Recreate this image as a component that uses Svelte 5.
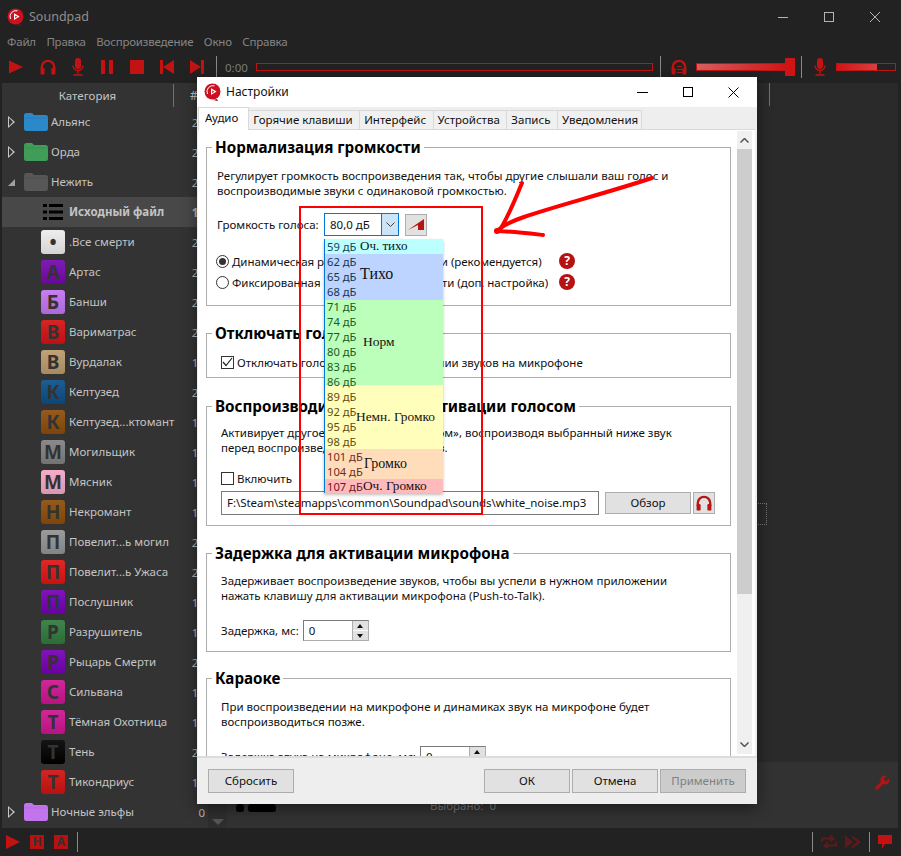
<script lang="ts">
  const menu = ['Файл', 'Правка', 'Воспроизведение', 'Окно', 'Справка'];
  const tabs = ['Аудио', 'Горячие клавиши', 'Интерфейс', 'Устройства', 'Запись', 'Уведомления'];

  const rows = [
    { name: '.Все смерти', letter: '•', color: '#ececec', count: '21' },
    { name: 'Артас', letter: 'А', color: '#7408ae', count: '21' },
    { name: 'Банши', letter: 'Б', color: '#c273ef', count: '21' },
    { name: 'Вариматрас', letter: 'В', color: '#d21212', count: '21' },
    { name: 'Вурдалак', letter: 'В', color: '#bb9a6c', count: '11' },
    { name: 'Келтузед', letter: 'К', color: '#0b4f88', count: '21' },
    { name: 'Келтузед...ктомант', letter: 'К', color: '#8c4c0a', count: '11' },
    { name: 'Могильщик', letter: 'М', color: '#808080', count: '11' },
    { name: 'Мясник', letter: 'М', color: '#f3a6c4', count: '11' },
    { name: 'Некромант', letter: 'Н', color: '#8c4c0a', count: '11' },
    { name: 'Повелит...ь могил', letter: 'П', color: '#929292', count: '21' },
    { name: 'Повелит...ь Ужаса', letter: 'П', color: '#de1414', count: '21' },
    { name: 'Послушник', letter: 'П', color: '#7400b4', count: '11' },
    { name: 'Разрушитель', letter: 'Р', color: '#2f7a3c', count: '11' },
    { name: 'Рыцарь Смерти', letter: 'Р', color: '#7400b4', count: '21' },
    { name: 'Сильвана', letter: 'С', color: '#cc1590', count: '11' },
    { name: 'Тёмная Охотница', letter: 'Т', color: '#cc1590', count: '11' },
    { name: 'Тень', letter: 'Т', color: '#000000', count: '21' },
    { name: 'Тикондриус', letter: 'Т', color: '#cf1212', count: '11' }
  ];

  const bands = [
    { label: 'Оч. тихо', color: '#bbffff', h: 15, x: 35, y: -1, size: 13 },
    { label: 'Тихо', color: '#bcd4ff', h: 46, x: 35, y: -3, size: 16 },
    { label: 'Норм', color: '#bbffbb', h: 85, x: 38, y: -1, size: 13.5 },
    { label: 'Немн. Громко', color: '#ffffbb', h: 64, x: 31, y: 0, size: 13.4 },
    { label: 'Громко', color: '#ffddbb', h: 30, x: 39, y: 0, size: 14 },
    { label: 'Оч. Громко', color: '#ffbbbb', h: 14, x: 38, y: 0, size: 13.3 }
  ];

  const levels = [
    { db: 59, color: '#0f4560' }, { db: 62, color: '#103658' }, { db: 65, color: '#103658' },
    { db: 68, color: '#103658' }, { db: 71, color: '#175c24' }, { db: 74, color: '#175c24' },
    { db: 77, color: '#175c24' }, { db: 80, color: '#175c24' }, { db: 83, color: '#175c24' },
    { db: 86, color: '#275c24' }, { db: 89, color: '#5e4c10' }, { db: 92, color: '#5e4c10' },
    { db: 95, color: '#5e4c10' }, { db: 98, color: '#5e4c10' }, { db: 101, color: '#6e2c18' },
    { db: 104, color: '#6e2c18' }, { db: 107, color: '#6e1424' }
  ];
</script>

{#snippet logo(size)}
  <svg class="logo" width={size} height={size} viewBox="0 0 18 18">
    <circle cx="8.5" cy="8.5" r="8" fill="#cc1020" />
    <path d="M3.5 11a6 6 0 0 1 7-8.2" fill="none" stroke="#fff" stroke-width="1" />
    <path d="M7 5.2v6.8l5.6-3.4z" fill="#fff" />
    <path d="M8.2 7.4v2.6l2.2-1.3z" fill="#cc1020" />
    <path d="M9 17l4-1 1 2z" fill="#8c0c18" />
  </svg>
{/snippet}

{#snippet headphones(size)}
  <svg width={size} height={size} viewBox="0 0 16 16">
    <path d="M1.8 11V8a6.2 6.2 0 0 1 12.4 0v3" fill="none" stroke="currentColor" stroke-width="2.3" />
    <rect x="0.6" y="9" width="4" height="6.6" rx="1.2" fill="currentColor" />
    <rect x="11.4" y="9" width="4" height="6.6" rx="1.2" fill="currentColor" />
  </svg>
{/snippet}

{#snippet mic()}
  <svg width="12" height="18" viewBox="0 0 12 18">
    <rect x="3" y="0" width="6" height="11" rx="3" fill="currentColor" />
    <path d="M1 7.5a5 5 0 0 0 10 0M6 12.5v3.5M1.5 17h9" fill="none" stroke="currentColor" stroke-width="1.3" />
  </svg>
{/snippet}

{#snippet folder(color)}
  <svg width="24" height="18" viewBox="0 0 24 18">
    <path d="M0 2.5Q0 0 2.5 0H8l2 2h11.5Q24 2 24 4.5v11q0 2.5-2.5 2.5h-19Q0 18 0 15.5z" fill={color} />
    <path d="M0 5h24" stroke="#000" stroke-opacity=".08" />
  </svg>
{/snippet}

{#snippet help()}
  <span class="help">?</span>
{/snippet}

<div class="app">
  <header class="titlebar">
    {@render logo(18)}
    <span class="app-title">Soundpad</span>
    <div class="win-btns">
      <svg width="10" height="10" viewBox="0 0 10 10"><path d="M0 5.5h10" stroke="currentColor" /></svg>
      <svg width="10" height="10" viewBox="0 0 10 10"><rect x=".5" y=".5" width="9" height="9" fill="none" stroke="currentColor" /></svg>
      <svg width="10" height="10" viewBox="0 0 10 10"><path d="M0 0l10 10M10 0L0 10" stroke="currentColor" /></svg>
    </div>
  </header>

  <nav class="menubar">
    {#each menu as item}<span>{item}</span>{/each}
  </nav>

  <div class="toolbar">
    <div class="tool-group">
      <svg width="16" height="16" viewBox="0 0 16 16"><path d="M1 1.5v13l14-6.5z" fill="currentColor" /></svg>
      {@render headphones(16)}
      {@render mic()}
      <svg width="14" height="14" viewBox="0 0 14 14"><path d="M1 0h4v14H1zM9 0h4v14H9z" fill="currentColor" /></svg>
      <svg width="14" height="14" viewBox="0 0 14 14"><rect width="14" height="14" fill="currentColor" /></svg>
      <svg width="14" height="14" viewBox="0 0 14 14"><path d="M0 0h3v14H0zM14 0v14L3 7z" fill="currentColor" /></svg>
      <svg width="14" height="14" viewBox="0 0 14 14"><path d="M14 0h-3v14h3zM0 0v14l11-7z" fill="currentColor" /></svg>
    </div>
    <i class="vsep first"></i>
    <span class="time">0:00</span>
    <div class="progress"></div>
    <i class="vsep"></i>
    <div class="hp-bars">
      {@render headphones(16)}
      <b></b>
    </div>
    <div class="volume">
      <div class="volume-fill"></div>
      <div class="volume-thumb"></div>
    </div>
    <i class="vsep vol-sep"></i>
    <div class="mic-wrap">{@render mic()}</div>
    <div class="mic-level"><div></div></div>
  </div>

  <main class="body">
    <aside class="sidebar">
      <div class="list-head">
        <span class="col-name">Категория</span>
        <span class="col-hash">#</span>
      </div>
      <div class="tree-row">
        <span class="exp"></span>{@render folder('#2b88c9')}<span class="tree-name">Альянс</span><span class="count">20</span>
      </div>
      <div class="tree-row">
        <span class="exp"></span>{@render folder('#3f9d58')}<span class="tree-name">Орда</span><span class="count">20</span>
      </div>
      <div class="tree-row">
        <span class="exp open"></span>{@render folder('#575757')}<span class="tree-name">Нежить</span><span class="count">20</span>
      </div>
      <div class="child-row selected">
        <svg class="list-icon" width="20" height="18" viewBox="0 0 20 18">
          <path d="M0 1h4v3H0zM6 1h14v3H6zM0 7.5h4v3H0zM6 7.5h14v3H6zM0 14h4v3H0zM6 14h14v3H6z" fill="#000" />
        </svg>
        <span class="tree-name">Исходный файл</span><span class="count">11</span>
      </div>
      {#each rows as row}
        <div class="child-row">
          <span class="letter" style:background-color={row.color}>{row.letter}</span>
          <span class="tree-name">{row.name}</span><span class="count">{row.count}</span>
        </div>
      {/each}
      <div class="tree-row">
        <span class="exp"></span>{@render folder('#c274ec')}<span class="tree-name">Ночные эльфы</span><span class="count">0</span>
      </div>
    </aside>

    <div class="side-scroll"><i></i></div>

    <section class="content">
      <div class="content-top">
        <i class="head-sep"></i>
        <span class="dotted"></span>
      </div>
      <div class="content-bottom">
        <span class="blob small"></span><span class="blob wide"></span>
        <span class="selected-count">Выбрано:&nbsp; 0</span>
        <svg class="wrench" width="18" height="18" viewBox="0 0 24 24">
          <path d="M14.7 6.3a1 1 0 0 0 0 1.4l1.6 1.6a1 1 0 0 0 1.4 0l3.77-3.77a6 6 0 0 1-7.94 7.94l-6.91 6.91a2.12 2.12 0 0 1-3-3l6.91-6.91a6 6 0 0 1 7.94-7.94l-3.76 3.76z" fill="currentColor" />
        </svg>
      </div>
    </section>
  </main>

  <footer class="statusbar">
    <svg width="14" height="14" viewBox="0 0 14 14"><path d="M0 0v14l14-7z" fill="currentColor" /></svg>
    <span class="key">Н</span>
    <span class="key">А</span>
    <i class="vsep short"></i>
    <div class="status-right">
      <i class="vsep short"></i>
      <svg class="dim" width="16" height="16" viewBox="0 0 16 16">
        <path d="M1 8V4.5h11M9 1.5l3.5 3-3.5 3M15 8v3.5H4M7 8.5l-3.5 3 3.5 3" fill="none" stroke="currentColor" stroke-width="2" />
      </svg>
      <svg class="dim" width="16" height="14" viewBox="0 0 16 14"><path d="M0 0l8 7-8 7zM7 0l9 7-9 7 0-3 5-4-5-4z" fill="currentColor" /></svg>
      <i class="vsep short"></i>
      <svg width="14" height="14" viewBox="0 0 14 14"><path d="M0 0h14v9H7l-3 5V9H0z" fill="currentColor" /></svg>
    </div>
  </footer>

  <div class="dialog">
    <div class="dlg-title">
      {@render logo(18)}
      <span class="dlg-name">Настройки</span>
      <div class="dlg-btns">
        <svg width="11" height="11" viewBox="0 0 11 11"><path d="M0 5.5h11" stroke="#000" /></svg>
        <svg width="10" height="10" viewBox="0 0 10 10"><rect x=".5" y=".5" width="9" height="9" fill="none" stroke="#000" /></svg>
        <svg width="11" height="11" viewBox="0 0 11 11"><path d="M.5.5l10 10M10.5.5l-10 10" stroke="#000" /></svg>
      </div>
    </div>

    <div class="tabs">
      {#each tabs as tab, i}
        <span class="tab" class:active={i === 0}>{tab}</span>
      {/each}
    </div>

    <div class="pane">
      <div class="scroll">
        <fieldset class="g1">
          <legend>Нормализация громкости</legend>
          <div class="inner">
            <p>Регулирует громкость воспроизведения так, чтобы другие слышали ваш голос и<br />воспроизводимые звуки с одинаковой громкостью.</p>
            <div class="level-row">
              <span class="level-label">Громкость голоса:</span>
              <div class="combo">
                <span>80,0 дБ</span>
                <span class="combo-arrow">
                  <svg width="9" height="5" viewBox="0 0 9 5"><path d="M.5.5l4 4 4-4" fill="none" stroke="#404040" /></svg>
                </span>
              </div>
              <span class="square-btn">
                <svg width="16" height="11" viewBox="0 0 16 11"><path d="M0 11L16 0v11h-6V6z" fill="#b81414" /></svg>
              </span>
            </div>
            <label class="radio-row first">
              <span class="radio on"></span>
              <span class="radio-text">Динамическая регулировка громкости (рекомендуется)</span>
              {@render help()}
            </label>
            <label class="radio-row">
              <span class="radio"></span>
              <span class="radio-text">Фиксированная регулировка громкости (доп. настройка)</span>
              {@render help()}
            </label>
          </div>
        </fieldset>

        <fieldset class="g2">
          <legend>Отключать голос</legend>
          <div class="inner">
            <label class="check-row">
              <span class="check on">
                <svg width="11" height="10" viewBox="0 0 11 10"><path d="M1 5l3 3.5L10 1" fill="none" stroke="#222" stroke-width="1.2" /></svg>
              </span>
              Отключать голос при воспроизведении звуков на микрофоне
            </label>
          </div>
        </fieldset>

        <fieldset class="g3">
          <legend>Воспроизводить шум при активации голосом</legend>
          <div class="inner">
            <p>Активирует другое приложение «голосом», воспроизводя выбранный ниже звук<br />перед воспроизведением ваших звуков.</p>
            <label class="check-row enable">
              <span class="check"></span>
              Включить
            </label>
            <div class="file-row">
              <div class="file-input">F:\Steam\steamapps\common\Soundpad\sounds\white_noise.mp3</div>
              <span class="btn browse">Обзор</span>
              <span class="square-btn hp">{@render headphones(16)}</span>
            </div>
          </div>
        </fieldset>

        <fieldset class="g4">
          <legend>Задержка для активации микрофона</legend>
          <div class="inner">
            <p>Задерживает воспроизведение звуков, чтобы вы успели в нужном приложении<br />нажать клавишу для активации микрофона (Push-to-Talk).</p>
            <div class="spin-row">
              <span>Задержка, мс:</span>
              <div class="spin">
                <span class="spin-val">0</span>
                <span class="spin-btns"><i class="up"></i><i class="down"></i></span>
              </div>
            </div>
          </div>
        </fieldset>

        <fieldset class="g5">
          <legend>Караоке</legend>
          <div class="inner">
            <p>При воспроизведении на микрофоне и динамиках звук на микрофоне будет<br />воспроизводиться позже.</p>
            <div class="spin-row">
              <span>Задержка звука на микрофоне, мс:</span>
              <div class="spin">
                <span class="spin-val">0</span>
                <span class="spin-btns"><i class="up"></i><i class="down"></i></span>
              </div>
            </div>
          </div>
        </fieldset>
      </div>

      <div class="vscroll">
        <svg width="9" height="5" viewBox="0 0 9 5"><path d="M.5 4.5l4-4 4 4" fill="none" stroke="#555" stroke-width="1.5" /></svg>
        <div class="thumb"></div>
        <svg class="arrow-down" width="9" height="5" viewBox="0 0 9 5"><path d="M.5.5l4 4 4-4" fill="none" stroke="#555" stroke-width="1.5" /></svg>
      </div>
    </div>

    <div class="dlg-foot">
      <span class="btn">Сбросить</span>
      <div class="foot-right">
        <span class="btn">ОК</span>
        <span class="btn">Отмена</span>
        <span class="btn disabled">Применить</span>
      </div>
    </div>
  </div>

  <!-- выпадающий список громкости поверх диалога -->
  <div class="popup">
    {#each bands as band}
      <div class="band" style:background={band.color} style:height="{band.h}px">
        <span style:left="{band.x}px" style:margin-top="{band.y}px" style:font-size="{band.size}px">{band.label}</span>
      </div>
    {/each}
    <div class="levels">
      {#each levels as level}
        <span style:color={level.color}>{level.db} дБ</span>
      {/each}
    </div>
  </div>

  <div class="red-frame"></div>
  <svg class="scribble" width="170" height="70" viewBox="0 0 170 70">
    <path d="M160 3C115 18 60 32 32 42 20 46 12 50 6 55M30 8C24 22 18 38 9 53M4 56c14 0 30 2 47 4" fill="none" stroke="#f00" stroke-width="4" stroke-linecap="round" />
    <circle cx="5" cy="56" r="3" fill="#f00" />
  </svg>
</div>

<style>
  :global(body) {
    margin: 0;
    background: #222;
  }

  .app {
    position: relative;
    width: 901px;
    height: 856px;
    overflow: hidden;
    display: flex;
    flex-direction: column;
    background: #222;
    color: #c4c4c4;
    font-family: 'Noto Sans', sans-serif;
    font-size: 12px;
  }

  .titlebar {
    height: 33px;
    display: flex;
    align-items: center;
    padding-left: 7px;
    flex: none;
  }

  .app-title {
    margin-left: 4px;
    font-size: 12.5px;
    color: #8e8e8e;
  }

  .win-btns {
    margin-left: auto;
    margin-right: 21px;
    display: flex;
    gap: 36px;
    color: #b4b4b4;
  }

  .menubar {
    height: 20px;
    box-sizing: border-box;
    padding: 0 0 3px 7px;
    display: flex;
    align-items: center;
    gap: 10.5px;
    color: #858585;
    flex: none;
    font-size: 11.5px;
    letter-spacing: -0.2px;
  }

  .toolbar {
    height: 30px;
    box-sizing: border-box;
    padding-bottom: 2px;
    display: flex;
    align-items: center;
    color: #c21212;
    flex: none;
  }

  .tool-group {
    width: 205px;
    padding: 0 1px 0 8px;
    box-sizing: border-box;
    display: flex;
    align-items: center;
    justify-content: space-between;
  }

  .vsep {
    display: block;
    flex: none;
    width: 1px;
    height: 22px;
    margin: 0 7px;
    background: #8a8a8a;
  }

  .vsep.first {
    margin: 0 8px 0 11px;
  }

  .vsep.vol-sep {
    margin-left: 6px;
  }

  .time {
    width: 31px;
    flex: none;
    color: #7e7e7e;
    font-size: 11.5px;
  }

  .progress {
    width: 397px;
    height: 8px;
    box-sizing: border-box;
    border: 1px solid #c21212;
    flex: none;
  }

  .hp-bars {
    position: relative;
    width: 16px;
    height: 16px;
    margin-left: 3px;
  }

  .hp-bars b {
    position: absolute;
    left: 6px;
    top: 7px;
    width: 5px;
    height: 7px;
    background: repeating-linear-gradient(#c21212 0 1px, transparent 1px 3px);
  }

  .volume {
    position: relative;
    width: 99px;
    height: 18px;
    margin-left: 9px;
    flex: none;
  }

  .volume-fill {
    position: absolute;
    left: 0;
    right: 8px;
    top: 5px;
    height: 6px;
    border: 1px solid #c21212;
    background: linear-gradient(90deg, #d86060, #d01414);
  }

  .volume-thumb {
    position: absolute;
    right: 0;
    top: 0;
    width: 10px;
    height: 18px;
    border-radius: 1px;
    background: #d01414;
  }

  .mic-wrap {
    width: 12px;
    margin-left: 5px;
    display: flex;
  }

  .mic-level {
    width: 60px;
    height: 8px;
    box-sizing: border-box;
    margin-left: 10px;
    border: 1px solid #c21212;
  }

  .mic-level div {
    width: 40px;
    height: 100%;
    background: linear-gradient(90deg, #d01414, #d84040);
  }

  .body {
    flex: 1;
    display: flex;
    padding: 0 3px 0 2px;
    min-height: 0;
  }

  .sidebar {
    width: 206px;
    flex: none;
    background: #333;
  }

  .list-head {
    height: 24px;
    position: relative;
    display: flex;
    align-items: center;
    color: #c4c4c4;
  }

  .col-name {
    width: 172px;
    text-align: center;
    border-right: 1px solid #707070;
    height: 23px;
    line-height: 23px;
    box-sizing: border-box;
    font-size: 11.5px;
  }

  .col-hash {
    margin-left: 16px;
  }

  .tree-row,
  .child-row {
    height: 30px;
    display: flex;
    align-items: center;
    position: relative;
    font-size: 11.5px;
    color: #c4c4c4;
  }

  .tree-name {
    margin-bottom: 2px;
  }

  .tree-row {
    padding-left: 6px;
  }

  .tree-row svg {
    margin-left: 9px;
  }

  .tree-row .tree-name {
    margin-left: 3px;
  }

  .exp {
    width: 0;
    height: 0;
    position: relative;
    border-left: 7px solid #c8c8c8;
    border-top: 6px solid transparent;
    border-bottom: 6px solid transparent;
  }

  .exp::after {
    content: '';
    position: absolute;
    left: -6px;
    top: -4px;
    border-left: 4.5px solid #333;
    border-top: 4px solid transparent;
    border-bottom: 4px solid transparent;
  }

  .exp.open {
    border-left: 7px solid transparent;
    border-top: 0;
    border-bottom: 7px solid #a0a0a0;
    border-right: 0;
  }

  .exp.open::after {
    display: none;
  }

  .child-row {
    padding-left: 39px;
  }

  .child-row.selected {
    background: #484848;
    font-weight: 700;
  }

  .list-icon {
    margin-left: 2px;
    margin-right: 6px;
  }

  .letter {
    width: 24px;
    height: 24px;
    border-radius: 3px;
    flex: none;
    margin-right: 4px;
    display: flex;
    align-items: center;
    justify-content: center;
    font-size: 19px;
    font-weight: 700;
    color: #333;
    background-image: linear-gradient(rgba(255, 255, 255, 0.08), rgba(0, 0, 0, 0.1));
  }

  .count {
    position: absolute;
    right: 3px;
    color: #b8b8b8;
  }

  .side-scroll {
    width: 19px;
    flex: none;
    background: #2e2e2e;
    display: flex;
    align-items: flex-end;
    justify-content: center;
    padding-bottom: 3px;
    box-sizing: border-box;
    margin-top: 24px;
  }

  .side-scroll i {
    border-top: 6px solid #555;
    border-left: 6px solid transparent;
    border-right: 6px solid transparent;
  }

  .content {
    flex: 1;
    display: flex;
    flex-direction: column;
  }

  .content-top {
    flex: 1;
    background: #2a2a2a;
    position: relative;
  }

  .head-sep {
    position: absolute;
    left: 542px;
    top: 0;
    width: 1px;
    height: 23px;
    background: #707070;
  }

  .dotted {
    position: absolute;
    left: 518px;
    top: 420px;
    width: 20px;
    height: 20px;
    border: 1px dotted #777;
  }

  .content-bottom {
    height: 66px;
    background: #323232;
    position: relative;
  }

  .blob {
    position: absolute;
    top: 42px;
    height: 8px;
    background: #000;
    border-radius: 3px;
  }

  .blob.small {
    left: 9px;
    width: 8px;
  }

  .blob.wide {
    left: 21px;
    width: 28px;
  }

  .selected-count {
    position: absolute;
    left: 203px;
    top: 36px;
    color: #777;
    font-size: 11.5px;
  }

  .wrench {
    position: absolute;
    left: 646px;
    top: 12px;
    color: #b01414;
  }

  .statusbar {
    height: 28px;
    flex: none;
    display: flex;
    align-items: center;
    padding-left: 6px;
    color: #c21212;
  }

  .key {
    width: 14px;
    height: 14px;
    margin-left: 10px;
    background: #b51212;
    color: #333;
    font-weight: 700;
    font-size: 12px;
    line-height: 14px;
    text-align: center;
  }

  .key + .key {
    margin-left: 10px;
  }

  .vsep.short {
    height: 20px;
    margin: 0 0 0 9px;
  }

  .status-right {
    margin-left: auto;
    margin-right: 9px;
    display: flex;
    align-items: center;
    gap: 8px;
  }

  .status-right .vsep.short {
    margin: 0;
  }

  .dim {
    color: #5c1a1a;
  }

  /* settings dialog */
  .dialog {
    position: absolute;
    left: 197px;
    top: 77px;
    width: 560px;
    height: 727px;
    display: flex;
    flex-direction: column;
    background: #eee;
    color: #111;
    box-shadow: 0 4px 14px rgba(0, 0, 0, 0.45);
  }

  .dlg-title {
    height: 30px;
    flex: none;
    background: #fff;
    display: flex;
    align-items: center;
    padding-left: 7px;
    gap: 4px;
  }

  .dlg-name {
    margin-bottom: 2px;
  }

  .dlg-btns {
    margin-left: auto;
    margin-right: 18px;
    display: flex;
    gap: 35px;
  }

  .tabs {
    height: 23px;
    flex: none;
    display: flex;
    align-items: flex-end;
    padding-left: 1px;
    background: #eee;
  }

  .tab {
    height: 20px;
    line-height: 17px;
    padding: 0 6.5px 0 4px;
    box-sizing: border-box;
    border: 1px solid #d9d9d9;
    border-left: 0;
    background: #f0f0f0;
    font-size: 11.5px;
  }

  .tab:last-child {
    padding-right: 3px;
  }

  .tab.active {
    height: 23px;
    line-height: 20px;
    background: #fff;
    padding: 0 10px 0 6px;
    border: 1px solid #d9d9d9;
    border-bottom: 0;
    position: relative;
    z-index: 1;
  }

  .pane {
    flex: 1;
    min-height: 0;
    margin: 0 2px 0 1px;
    background: #fff;
    border-top: 1px solid #d9d9d9;
    display: flex;
    position: relative;
    top: -1px;
  }

  .scroll {
    width: 538px;
    padding: 7px 0 0 8px;
    box-sizing: border-box;
    overflow: hidden;
  }

  fieldset {
    margin: 0;
    padding: 0;
    width: 525px;
    box-sizing: border-box;
    border: 1px solid #adadad;
    min-inline-size: 0;
  }

  legend {
    margin-left: 5px;
    padding: 0 3px;
    font-size: 15.2px;
    font-weight: 700;
    line-height: 20px;
    color: #000;
  }

  .inner {
    padding: 11px 14px 10px;
  }

  .g1 .inner {
    padding: 11px 14px 12px 10px;
  }

  .g2 {
    margin-top: 17px;
  }

  .g2 .inner {
    padding: 11px 14px 7px;
  }

  .g3 {
    margin-top: 18px;
  }

  .g3 .inner {
    padding-top: 9px;
  }

  .g4 {
    margin-top: 17px;
  }

  .g4 .inner {
    padding-top: 10px;
  }

  .g5 {
    margin-top: 16px;
  }

  p {
    margin: 0;
    line-height: 15px;
    font-size: 11.5px;
  }

  .level-row {
    display: flex;
    align-items: center;
    margin-top: 15px;
    height: 23px;
  }

  .level-label {
    width: 107px;
    font-size: 11.5px;
  }

  .combo {
    width: 75px;
    height: 23px;
    box-sizing: border-box;
    border: 1px solid #0078d7;
    display: flex;
    align-items: center;
    padding-left: 5px;
    justify-content: space-between;
    font-size: 11.5px;
  }

  .combo-arrow {
    width: 16px;
    height: 100%;
    background: #cce4f7;
    border-left: 1px solid #0078d7;
    display: flex;
    align-items: center;
    justify-content: center;
  }

  .square-btn {
    width: 22px;
    height: 22px;
    box-sizing: border-box;
    margin-left: 6px;
    background: #e1e1e1;
    border: 1px solid #adadad;
    display: flex;
    align-items: center;
    justify-content: center;
  }

  .square-btn.hp {
    margin-left: 2px;
    color: #b81414;
  }

  .radio-row {
    display: flex;
    align-items: center;
    height: 20px;
    position: relative;
    font-size: 11.5px;
    margin: 0 0 1px -1px;
  }

  .radio-row.first {
    margin-top: 15px;
  }

  .radio-text {
    letter-spacing: -0.04px;
  }

  .radio {
    width: 13px;
    height: 13px;
    box-sizing: border-box;
    border: 1px solid #333;
    border-radius: 50%;
    margin-right: 3px;
    display: flex;
    align-items: center;
    justify-content: center;
  }

  .radio.on::after {
    content: '';
    width: 7px;
    height: 7px;
    border-radius: 50%;
    background: #333;
  }

  .help {
    position: absolute;
    left: 343px;
    width: 16px;
    height: 16px;
    border-radius: 50%;
    background: #b51212;
    color: #fff;
    font-weight: 700;
    font-size: 12px;
    line-height: 16px;
    text-align: center;
  }

  .check-row {
    display: flex;
    align-items: center;
    height: 16px;
    gap: 3px;
    font-size: 11.5px;
  }

  .check-row.enable {
    margin-top: 15px;
  }

  .check {
    width: 13px;
    height: 13px;
    box-sizing: border-box;
    border: 1px solid #333;
    display: flex;
    align-items: center;
    justify-content: center;
  }

  .file-row {
    display: flex;
    align-items: center;
    margin-top: 5px;
    height: 24px;
  }

  .file-input {
    width: 378px;
    height: 24px;
    box-sizing: border-box;
    border: 1px solid #7a7a7a;
    padding-left: 5px;
    line-height: 22px;
    white-space: nowrap;
    overflow: hidden;
    font-size: 11.5px;
    letter-spacing: -0.05px;
  }

  .btn {
    width: 86px;
    height: 24px;
    box-sizing: border-box;
    border: 1px solid #adadad;
    background: #e1e1e1;
    text-align: center;
    line-height: 22px;
    font-size: 11.5px;
    color: #111;
  }

  .btn.browse {
    margin-left: 6px;
    height: 22px;
    line-height: 20px;
  }

  .btn.disabled {
    background: #ccc;
    color: #808080;
  }

  .spin-row {
    display: flex;
    align-items: center;
    margin-top: 17px;
    gap: 4px;
    height: 21px;
    font-size: 11.5px;
  }

  .spin {
    width: 66px;
    height: 21px;
    box-sizing: border-box;
    border: 1px solid #adadad;
    border-top-color: #7a7a7a;
    border-left-color: #7a7a7a;
    display: flex;
    justify-content: space-between;
    align-items: stretch;
    padding-left: 5px;
    line-height: 19px;
  }

  .spin-btns {
    width: 15px;
    display: flex;
    flex-direction: column;
    gap: 1px;
    border-left: 1px solid #adadad;
  }

  .spin-btns i {
    flex: 1;
    background: #e1e1e1;
    display: flex;
    align-items: center;
    justify-content: center;
  }

  .up::after {
    content: '';
    border-bottom: 4px solid #111;
    border-left: 3px solid transparent;
    border-right: 3px solid transparent;
  }

  .down::after {
    content: '';
    border-top: 4px solid #111;
    border-left: 3px solid transparent;
    border-right: 3px solid transparent;
  }

  .vscroll {
    width: 15px;
    background: #f0f0f0;
    display: flex;
    flex-direction: column;
    align-items: center;
    padding-top: 7px;
    box-sizing: border-box;
    margin: 1px 0 2px 1px;
  }

  .thumb {
    width: 15px;
    height: 445px;
    background: #cdcdcd;
    margin-top: 6px;
  }

  .arrow-down {
    margin-top: auto;
    margin-bottom: 7px;
  }

  .dlg-foot {
    height: 48px;
    flex: none;
    box-sizing: border-box;
    border-top: 2px solid #dcdcdc;
    margin-top: -1px;
    display: flex;
    align-items: flex-start;
    padding: 11px 11px 0;
  }

  .foot-right {
    margin-left: auto;
    display: flex;
    gap: 2px;
  }

  /* overlays on the screenshot */
  .popup {
    position: absolute;
    left: 324px;
    top: 239px;
    width: 119px;
    height: 254px;
    box-sizing: border-box;
    border-left: 1px solid #0078d7;
    box-shadow: 0 2px 3px rgba(0, 0, 0, 0.25);
    color: #111;
    overflow: hidden;
  }

  .band {
    position: relative;
  }

  .band span {
    position: absolute;
    top: 50%;
    transform: translateY(-50%);
    font-family: 'Liberation Serif', serif;
    white-space: nowrap;
  }

  .levels {
    position: absolute;
    left: 2px;
    top: 0;
    display: flex;
    flex-direction: column;
    font-size: 11.2px;
    line-height: 15px;
  }

  .red-frame {
    position: absolute;
    left: 299px;
    top: 206px;
    width: 184px;
    height: 309px;
    box-sizing: border-box;
    border: 2px solid #f00;
  }

  .scribble {
    position: absolute;
    left: 492px;
    top: 175px;
  }
</style>
